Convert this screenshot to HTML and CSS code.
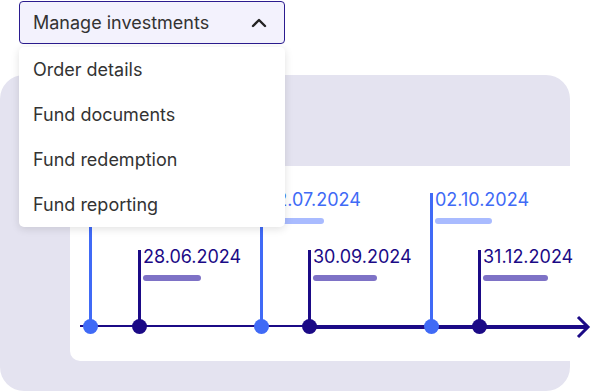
FILE: index.html
```html
<!DOCTYPE html>
<html lang="en">

<head>
    <meta charset="UTF-8">
    <meta name="viewport" content="width=device-width, initial-scale=1.0">
    <title>Manage investments</title>
    <link rel="stylesheet" href="styles.css">
</head>

<body>
    <div class="stage">
        <div class="panel">
            <div class="card">
                <!-- axis with arrow -->
                <div class="axis-thin"></div>
                <div class="axis-thick"></div>
                <svg class="arrow" width="16" height="24" viewBox="0 0 16 24">
                    <path d="M2 2 L12 12 L2 22" fill="none" stroke="#1b0a86" stroke-width="3" />
                </svg>

                <!-- blue markers (first label sits under the open menu) -->
                <div class="marker blue" style="left: 19px;"></div>
                <div class="marker blue" style="left: 190px;">
                    <span class="date">02.07.2024</span>
                    <span class="bar" style="width: 59px;"></span>
                </div>
                <div class="marker blue" style="left: 360px;">
                    <span class="date">02.10.2024</span>
                    <span class="bar" style="width: 57px;"></span>
                </div>

                <!-- dark markers -->
                <div class="marker dark" style="left: 68px;">
                    <span class="date">28.06.2024</span>
                    <span class="bar" style="width: 58px;"></span>
                </div>
                <div class="marker dark" style="left: 238px;">
                    <span class="date">30.09.2024</span>
                    <span class="bar" style="width: 64px;"></span>
                </div>
                <div class="marker dark" style="left: 408px;">
                    <span class="date">31.12.2024</span>
                    <span class="bar" style="width: 65px;"></span>
                </div>
            </div>
        </div>

        <!-- Dropdown -->
        <div class="dropdown">
            <div class="dropdown-toggle">
                <span>Manage investments</span>
                <svg width="16" height="10" viewBox="0 0 16 10">
                    <path d="M2 8 L8 2 L14 8" fill="none" stroke="#222" stroke-width="2.4" stroke-linecap="round" stroke-linejoin="round" />
                </svg>
            </div>
            <ul class="dropdown-menu">
                <li>Order details</li>
                <li>Fund documents</li>
                <li>Fund redemption</li>
                <li>Fund reporting</li>
            </ul>
        </div>
    </div>
</body>

</html>
```

FILE: styles.css
```css
body {
    margin: 0;
    background-color: white;
    font-family: Inter, 'Noto Sans', sans-serif;
}

.stage {
    position: relative;
    width: 608px;
    height: 391px;
    overflow: hidden;
}

.panel {
    margin-top: 75px;
    width: 570px;
    height: 316px;
    padding: 91px 0 0 70px;
    box-sizing: border-box;
    background-color: #e4e3f0;
    border-radius: 24px;
}

.card {
    position: relative;
    width: 500px;
    height: 195px;
    background-color: white;
    border-radius: 0 0 0 10px;
}

.axis-thin {
    position: absolute;
    left: 10px;
    top: 159px;
    width: 232px;
    height: 2px;
    background-color: #1b0a86;
}

.axis-thick {
    position: absolute;
    left: 240px;
    top: 159px;
    width: 276px;
    height: 4px;
    background-color: #1b0a86;
}

.arrow {
    position: absolute;
    left: 506px;
    top: 149px;
}

.marker {
    position: absolute;
    width: 3px;
    bottom: 35px;
}

.marker::after {
    content: '';
    position: absolute;
    left: -6px;
    bottom: -8px;
    width: 15px;
    height: 15px;
    border-radius: 50%;
    background-color: inherit;
}

.marker.blue {
    top: 27px;
    background-color: #406af6;
}

.marker.dark {
    top: 84px;
    background-color: #1b0a86;
}

.date {
    position: absolute;
    left: 5px;
    top: -3px;
    font-size: 18px;
    line-height: 20px;
    white-space: nowrap;
}

.bar {
    position: absolute;
    left: 5px;
    top: 25px;
    height: 6px;
    border-radius: 3px;
}

.blue .date {
    color: #406af6;
}

.blue .bar {
    background-color: #a9bbff;
}

.dark .date {
    color: #1b0a86;
}

.dark .bar {
    background-color: #7e72c6;
}

.dropdown {
    position: absolute;
    left: 19px;
    top: 1px;
    width: 266px;
}

.dropdown-toggle {
    display: flex;
    align-items: center;
    justify-content: space-between;
    height: 43px;
    padding: 0 17px 0 13px;
    box-sizing: border-box;
    border: 1px solid #2b1c8f;
    border-radius: 4px;
    background-color: #f3f2fd;
    color: #333;
    font-size: 18px;
}

.dropdown-menu {
    list-style: none;
    margin: 3px 0 0 0;
    padding: 0;
    background-color: white;
    border-radius: 5px;
    box-shadow: 0 2px 8px rgba(0, 0, 0, 0.12);
}

.dropdown-menu li {
    height: 45px;
    line-height: 45px;
    padding-left: 14px;
    color: #333;
    font-size: 18px;
}
```
